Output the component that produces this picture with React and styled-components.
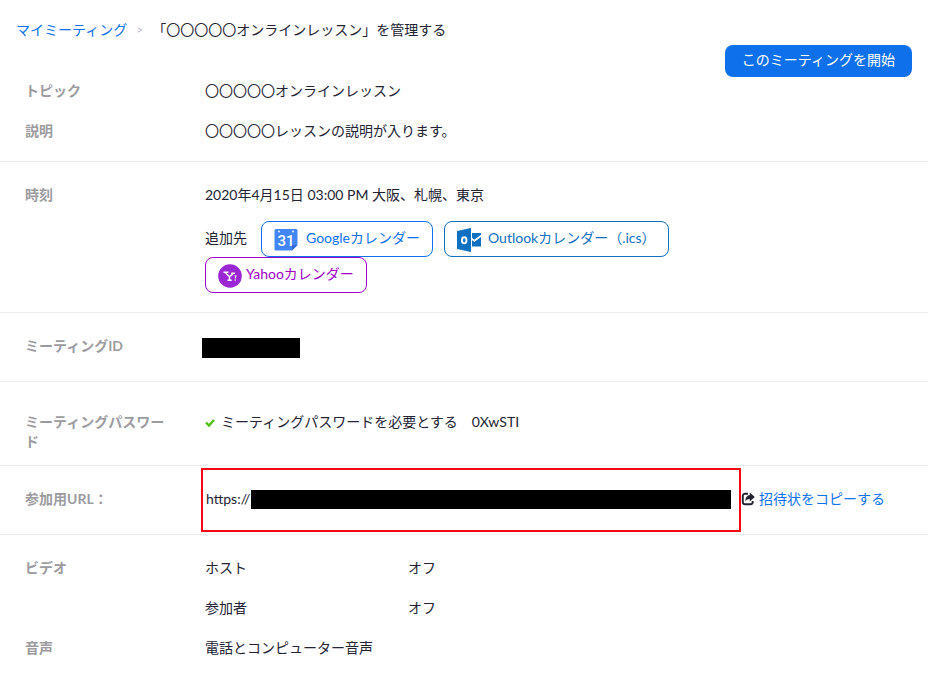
import React from "react";
import styled, { createGlobalStyle } from "styled-components";

const GlobalStyle = createGlobalStyle`
  * {
    box-sizing: border-box;
  }

  body {
    margin: 0;
    background: #fff;
    color: #232333;
    font-family: Lato, "Noto Sans CJK JP", sans-serif;
    font-size: 14px;
    line-height: 20px;
  }

  button {
    font: inherit;
    cursor: pointer;
  }
`;

const Page = styled.main`
  width: 100%;
`;

const Breadcrumb = styled.nav`
  display: flex;
  align-items: center;
  gap: 9px;
  padding: 20px 16px 0;
`;

const Separator = styled.span`
  color: #babacc;
  font-size: 12px;
`;

const Title = styled.h1`
  margin: 0;
  font-size: 14px;
  font-weight: 400;
`;

const Link = styled.a`
  color: #0e71eb;
  text-decoration: none;
`;

const Toolbar = styled.div`
  display: flex;
  justify-content: flex-end;
  padding: 5px 16px 4px;
`;

const StartButton = styled.button`
  height: 32px;
  padding: 0 17px 2px;
  border: 0;
  border-radius: 8px;
  background: #0e71eb;
  color: #fff;
`;

const Section = styled.dl`
  display: grid;
  row-gap: 20px;
  margin: 0;
  padding: ${(props) => props.$padding || "23px 0"};
  border-bottom: ${(props) => (props.$last ? "0" : "1px solid #ededf0")};
`;

const Row = styled.div`
  display: grid;
  grid-template-columns: 150px minmax(0, 1fr);
  column-gap: 26px;
  align-items: ${(props) => props.$align || "start"};
  padding-left: 25px;
`;

const Label = styled.dt`
  color: #9c9c9f;
  font-weight: 700;
`;

const Value = styled.dd`
  margin: 0;
  padding-left: ${(props) => (props.$flush ? "0" : "4px")};
`;

const CalendarList = styled.div`
  display: flex;
  flex-wrap: wrap;
  align-items: center;
  column-gap: 11px;
  max-width: 500px;
  margin-top: 16px;
`;

const AddTo = styled.span`
  margin-right: 3px;
  padding-bottom: 2px;
`;

const CalendarButton = styled.button`
  display: flex;
  align-items: center;
  gap: ${(props) => props.$gap};
  height: 36px;
  padding: 0 12px;
  border: 1px solid ${(props) => props.$color};
  border-radius: 8px;
  background: #fff;
  color: ${(props) => props.$color};

  span {
    padding-bottom: 2px;
  }

  svg {
    flex: none;
    margin-top: 2px;
  }
`;

const Masked = styled.span`
  display: block;
  flex: ${(props) => (props.$grow ? "1" : "none")};
  width: ${(props) => props.$width || "auto"};
  height: ${(props) => props.$height};
  background: #000;
`;

const IdValue = styled(Value)`
  padding: 2px 0 0 1px;
`;

const CheckLine = styled.div`
  display: flex;
  align-items: center;
  gap: 6px;
`;

const UrlLabel = styled(Label)`
  padding-bottom: 2px;
`;

const UrlLine = styled.div`
  display: flex;
  align-items: center;
`;

const UrlBox = styled.div`
  display: flex;
  flex: 0 1 540px;
  align-items: center;
  gap: 1px;
  min-width: 0;
  height: 64px;
  padding: 0 8px 2px 3px;
  border: 2px solid #f40612;
`;

const CopyLink = styled(Link)`
  display: flex;
  align-items: center;
  gap: 3px;
  padding-bottom: 2px;
  white-space: nowrap;
`;

const OptionList = styled.ul`
  display: grid;
  row-gap: 20px;
  margin: 0;
  padding: 0;
  list-style: none;
`;

const Option = styled.li`
  display: grid;
  grid-template-columns: 203px 1fr;
`;

const GoogleIcon = () => (
  <svg width="24" height="24" viewBox="0 0 24 24" aria-hidden="true">
    <path d="M2 1h20a1.500 1.500 0 0 1 1.500 1.500V17L18 22.500H2A1.500 1.500 0 0 1 .5 21V2.500A1.500 1.500 0 0 1 2 1z" fill="#4285f4" />
    <path d="M18 22.500V17h5.500z" fill="#3367d6" />
    <circle cx="5" cy="3.500" r=".9" fill="#fff" />
    <circle cx="19" cy="3.500" r=".9" fill="#fff" />
    <text x="12" y="17.500" textAnchor="middle" fill="#fff" fontFamily="Roboto, sans-serif" fontSize="15" fontWeight="500">
      31
    </text>
  </svg>
);

const OutlookIcon = () => (
  <svg width="25" height="24" viewBox="0 0 25 24" aria-hidden="true">
    <path d="M0 3l14-3v24L0 21z" fill="#0f6fc0" />
    <path d="M15 5h9v13.500h-9z" fill="#0f6fc0" />
    <path d="M14.500 10.500l2.800 2.300L24.500 7.500" fill="none" stroke="#fff" strokeWidth="1.700" />
    <ellipse cx="7.200" cy="12.300" rx="2.300" ry="3.100" fill="none" stroke="#fff" strokeWidth="1.900" />
  </svg>
);

const YahooIcon = () => (
  <svg width="24" height="24" viewBox="0 0 24 24" aria-hidden="true">
    <circle cx="12" cy="12" r="11.800" fill="#9b26d3" />
    <path
      d="M5.500 8.300h5M7.300 8.500l4.200 4.300M15.500 9.300l-4 3.500v3.700M13.200 9.300h3.800M9.500 16.300h4.200"
      fill="none"
      stroke="#fff"
      strokeWidth="1.500"
    />
    <path d="M16.700 11.300l1.900.3-.9 3h-.7z" fill="#fff" />
    <circle cx="17.200" cy="16" r=".8" fill="#fff" />
  </svg>
);

const CheckIcon = () => (
  <svg width="10" height="10" viewBox="0 0 10 10" aria-hidden="true">
    <path d="M1 5.500l3 3 5-5.500" fill="none" stroke="#4bc20f" strokeWidth="2.400" />
  </svg>
);

const ShareIcon = () => (
  <svg width="15" height="14" viewBox="0 0 15 14" aria-hidden="true">
    <path
      d="M7 1.800H4A2.200 2.200 0 0 0 1.800 4v6A2.200 2.200 0 0 0 4 12.200h5.500a2.200 2.200 0 0 0 2.200-2.200V9"
      fill="none"
      stroke="#232333"
      strokeWidth="1.900"
    />
    <path d="M8.800.6L13.800 5 8.800 9.400V7C7 7 5.400 7.700 4.300 9.400 4.300 5.600 6 3.300 8.800 3z" fill="#232333" />
  </svg>
);

const calendars = [
  { name: "Googleカレンダー", color: "#0e71eb", gap: "8px", Icon: GoogleIcon },
  { name: "Outlookカレンダー（.ics）", color: "#0f6fc0", gap: "6px", Icon: OutlookIcon },
  { name: "Yahooカレンダー", color: "#a000c8", gap: "4px", Icon: YahooIcon }
];

const videoOptions = [
  { who: "ホスト", state: "オフ" },
  { who: "参加者", state: "オフ" }
];

export default function App() {
  return (
    <Page>
      <GlobalStyle />
      <Breadcrumb>
        <Link href="#meetings">マイミーティング</Link>
        <Separator>&gt;</Separator>
        <Title>「〇〇〇〇〇オンラインレッスン」を管理する</Title>
      </Breadcrumb>
      <Toolbar>
        <StartButton type="button">このミーティングを開始</StartButton>
      </Toolbar>

      <Section $padding="0 0 20px">
        <Row>
          <Label>トピック</Label>
          <Value>〇〇〇〇〇オンラインレッスン</Value>
        </Row>
        <Row>
          <Label>説明</Label>
          <Value>〇〇〇〇〇レッスンの説明が入ります。</Value>
        </Row>
      </Section>

      <Section $padding="23px 0 19px">
        <Row>
          <Label>時刻</Label>
          <Value>
            2020年4月15日 03:00 PM 大阪、札幌、東京
            <CalendarList>
              <AddTo>追加先</AddTo>
              {calendars.map(({ name, color, gap, Icon }) => (
                <CalendarButton key={name} type="button" $color={color} $gap={gap}>
                  <Icon />
                  <span>{name}</span>
                </CalendarButton>
              ))}
            </CalendarList>
          </Value>
        </Row>
      </Section>

      <Section>
        <Row>
          <Label>ミーティングID</Label>
          <IdValue>
            <Masked $width="98px" $height="20px" />
          </IdValue>
        </Row>
      </Section>

      <Section $padding="30px 0 13px">
        <Row>
          <Label>ミーティングパスワード</Label>
          <Value>
            <CheckLine>
              <CheckIcon />
              <span>ミーティングパスワードを必要とする　0XwSTI</span>
            </CheckLine>
          </Value>
        </Row>
      </Section>

      <Section $padding="2px 0">
        <Row $align="center">
          <UrlLabel>参加用URL：</UrlLabel>
          <Value $flush>
            <UrlLine>
              <UrlBox>
                https://
                <Masked $grow $height="19px" />
              </UrlBox>
              <CopyLink href="#invitation">
                <ShareIcon />
                招待状をコピーする
              </CopyLink>
            </UrlLine>
          </Value>
        </Row>
      </Section>

      <Section $last>
        <Row>
          <Label>ビデオ</Label>
          <Value>
            <OptionList>
              {videoOptions.map(({ who, state }) => (
                <Option key={who}>
                  <span>{who}</span>
                  <span>{state}</span>
                </Option>
              ))}
            </OptionList>
          </Value>
        </Row>
        <Row>
          <Label>音声</Label>
          <Value>電話とコンピューター音声</Value>
        </Row>
      </Section>
    </Page>
  );
}
